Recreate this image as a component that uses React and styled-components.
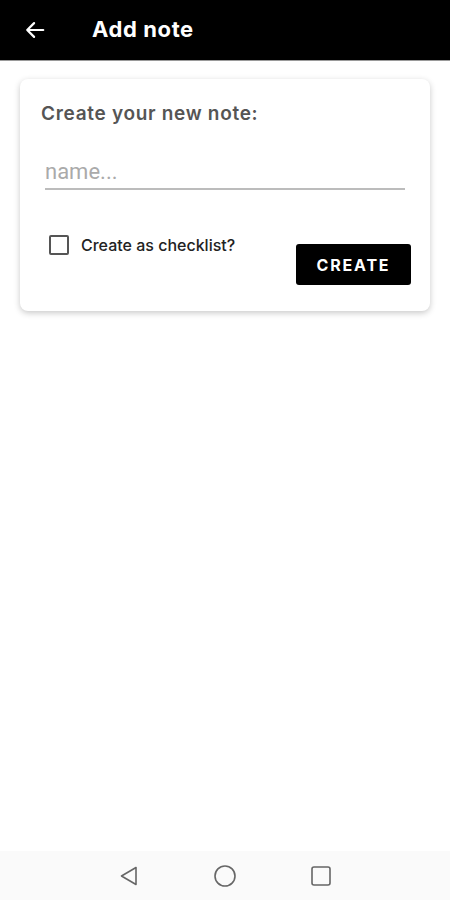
import React, { useState } from "react";
import styled, { createGlobalStyle } from "styled-components";

const GlobalStyle = createGlobalStyle`
  html, body {
    margin: 0;
    padding: 0;
    background: #fff;
    font-family: Inter, Roboto, "Noto Sans", sans-serif;
  }
  * { box-sizing: border-box; }
`;

const Screen = styled.div`
  width: 450px;
  height: 900px;
  display: flex;
  flex-direction: column;
  background: #fff;
`;

const Header = styled.header`
  height: 61px;
  background: #000;
  border-bottom: 1px solid #9a9a9a;
  display: flex;
  align-items: center;
  padding-left: 23px;
  gap: 45px;
`;

const BackButton = styled.button`
  border: none;
  background: none;
  padding: 0;
  width: 24px;
  height: 24px;
  display: flex;
  align-items: center;
  justify-content: center;
  cursor: pointer;
`;

const Title = styled.h1`
  margin: 0;
  color: #fff;
  font-size: 22px;
  font-weight: 700;
  letter-spacing: 0.6px;
  padding-bottom: 3px;
`;

const Content = styled.main`
  flex: 1;
  padding: 18px 20px;
`;

const Card = styled.section`
  background: #fff;
  border-radius: 8px;
  box-shadow: 0 2px 6px rgba(0, 0, 0, 0.22);
  padding: 23px 19px 26px 21px;
`;

const Heading = styled.h2`
  margin: 0;
  font-size: 19px;
  line-height: 23px;
  font-weight: 600;
  letter-spacing: 0.7px;
  color: #555;
`;

const NameInput = styled.input`
  display: block;
  width: 360px;
  margin: 33px 0 0 4px;
  border: none;
  border-bottom: 2px solid #bcbcbc;
  padding: 0 0 4px 0;
  font-family: Roboto, "Noto Sans", sans-serif;
  font-size: 22px;
  line-height: 26px;
  height: 32px;
  color: #333;
  outline: none;
  background: transparent;
  &::placeholder { color: #aaa; }
`;

const Footer = styled.div`
  display: flex;
  justify-content: space-between;
  align-items: flex-start;
  margin-top: 45px;
  padding-left: 8px;
`;

const CheckLabel = styled.label`
  display: flex;
  align-items: center;
  gap: 12px;
  font-size: 16px;
  font-weight: 500;
  color: #222;
  cursor: pointer;
`;

const Box = styled.span`
  width: 20px;
  height: 20px;
  border: 2px solid #555;
  border-radius: 2px;
  background: ${(p) => (p.checked ? "#000" : "transparent")};
`;

const CreateButton = styled.button`
  width: 115px;
  height: 41px;
  margin-top: 9px;
  background: #000;
  color: #fff;
  border: none;
  border-radius: 3px;
  font-family: inherit;
  font-size: 16px;
  font-weight: 700;
  letter-spacing: 1.8px;
  cursor: pointer;
`;

const NavBar = styled.nav`
  height: 49px;
  background: #fafafa;
  display: flex;
  justify-content: center;
  align-items: center;
  gap: 74px;
`;

const NavIcon = styled.svg`
  width: 22px;
  height: 22px;
  fill: none;
  stroke: #666;
  stroke-width: 1.6;
`;

export default function App() {
  const [checked, setChecked] = useState(false);
  return (
    <Screen>
      <GlobalStyle />
      <Header>
        <BackButton aria-label="back">
          <svg width="22" height="22" viewBox="0 0 24 24" fill="none" stroke="#fff" strokeWidth="2.4" strokeLinecap="round" strokeLinejoin="round">
            <path d="M21 12H3.5M11 4.5 3.5 12l7.5 7.5" />
          </svg>
        </BackButton>
        <Title>Add note</Title>
      </Header>
      <Content>
        <Card>
          <Heading>Create your new note:</Heading>
          <NameInput placeholder="name..." />
          <Footer>
            <CheckLabel onClick={() => setChecked(!checked)}>
              <Box checked={checked} />
              Create as checklist?
            </CheckLabel>
            <CreateButton>CREATE</CreateButton>
          </Footer>
        </Card>
      </Content>
      <NavBar>
        <NavIcon viewBox="0 0 22 22">
          <path d="M18 2.5v17L3.5 11z" strokeLinejoin="round" />
        </NavIcon>
        <NavIcon viewBox="0 0 22 22">
          <circle cx="11" cy="11" r="10" />
        </NavIcon>
        <NavIcon viewBox="0 0 22 22">
          <rect x="2" y="2" width="18" height="18" rx="2" />
        </NavIcon>
      </NavBar>
    </Screen>
  );
}
